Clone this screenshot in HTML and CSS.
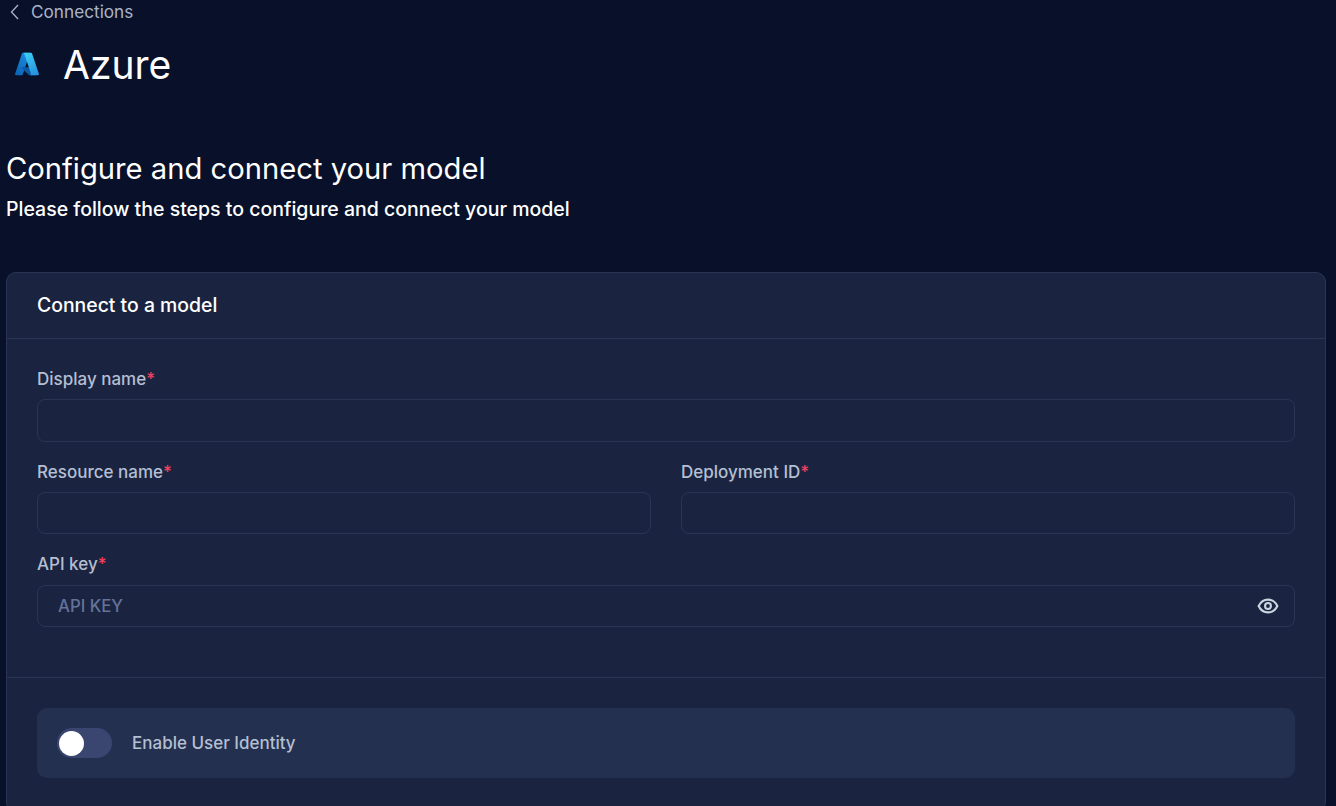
FILE: index.html
```html
<!DOCTYPE html>
<html lang="en">
<head>
<meta charset="utf-8">
<title>Azure</title>
<link rel="stylesheet" href="styles.css">
</head>
<body>
<main class="page">
  <a class="back" href="#">
    <svg class="back-icon" width="10" height="16" viewBox="0 0 10 16" fill="none"><path d="M8 1 L1.5 8 L8 15" stroke="#aab4c8" stroke-width="1.3"/></svg>
    <span>Connections</span>
  </a>
  <div class="title-row">
    <svg class="logo" viewBox="0 0 96 96">
      <defs>
        <linearGradient id="a1" x1="0.6" y1="0" x2="0.1" y2="1"><stop offset="0" stop-color="#1b8ade"/><stop offset="1" stop-color="#0b63b4"/></linearGradient>
        <linearGradient id="a2" x1="0.3" y1="0" x2="0.7" y2="1"><stop offset="0" stop-color="#3ccbf4"/><stop offset="1" stop-color="#2892df"/></linearGradient>
      </defs>
      <path d="M33.34 6.54h26.04l-27.03 80.1a4.15 4.15 0 0 1-3.94 2.81H8.15a4.14 4.14 0 0 1-3.93-5.47L29.4 9.38a4.15 4.15 0 0 1 3.94-2.83z" fill="url(#a1)"/>
      <path d="M71.17 60.26H29.88a1.91 1.91 0 0 0-1.3 3.31l26.53 24.76a4.17 4.17 0 0 0 2.85 1.12h23.38z" fill="#0a5aa8"/>
      <path d="M66.6 9.36a4.14 4.14 0 0 0-3.93-2.82H33.65a4.15 4.15 0 0 1 3.93 2.82l25.18 74.62a4.15 4.15 0 0 1-3.93 5.48h29.02a4.15 4.15 0 0 0 3.93-5.48z" fill="url(#a2)"/>
    </svg>
    <h1>Azure</h1>
  </div>
  <section class="intro">
    <h2>Configure and connect your model</h2>
    <p>Please follow the steps to configure and connect your model</p>
  </section>
  <section class="card">
    <header class="card-head"><span>Connect to a model</span></header>
    <div class="form">
      <div class="field">
        <label>Display name<span class="req">*</span></label>
        <div class="input display"></div>
      </div>
      <div class="two">
        <div class="field">
          <label>Resource name<span class="req">*</span></label>
          <div class="input"></div>
        </div>
        <div class="field">
          <label>Deployment ID<span class="req">*</span></label>
          <div class="input"></div>
        </div>
      </div>
      <div class="field field-key">
        <label>API key<span class="req">*</span></label>
        <div class="input key">
          <span class="placeholder">API KEY</span>
          <svg width="22" height="22" viewBox="0 0 24 24" fill="none" stroke="#cbd5e1" stroke-width="2.3"><path d="M1.8 12 C4 7.4 7.6 5 12 5 C16.4 5 20 7.4 22.2 12 C20 16.6 16.4 19 12 19 C7.6 19 4 16.6 1.8 12 Z"/><circle cx="12" cy="12" r="3.2"/></svg>
        </div>
      </div>
    </div>
    <div class="identity-wrap">
      <div class="identity">
        <span class="toggle"><span class="knob"></span></span>
        <span class="identity-label">Enable User Identity</span>
      </div>
    </div>
  </section>
</main>
</body>
</html>
```

FILE: styles.css
```css
* { box-sizing: border-box; }
html, body { margin: 0; height: 806px; overflow: hidden; }
body {
  background: #081129;
  font-family: Inter, "Liberation Sans", sans-serif;
  color: #fff;
}
.page { padding: 0 10px 0 6px; }
.back {
  display: flex; align-items: center; gap: 11px;
  height: 23px; padding-left: 4px;
  color: #aab4c8; font-size: 17.2px; text-decoration: none;
}
.title-row { display: flex; align-items: center; gap: 23px; height: 60px; padding: 0 0 4px 8px; margin-top: 14px; }
.logo { display: block; width: 26px; height: 26px; margin-top: -2px; }
h1 { margin: 0; font-size: 39px; font-weight: 400; line-height: 44px; }
.intro { margin-top: 54px; }
h2 { margin: 0; font-size: 29.2px; font-weight: 430; line-height: 36px; }
.intro p { margin: 9px 0 0; font-size: 19.5px; line-height: 27px; font-weight: 500; }
.card {
  margin-top: 49px;
  height: 540px;
  background: #1a2440;
  border: 1px solid #2a3556;
  border-radius: 10px;
}
.card-head {
  height: 66px; padding: 0 30px 2px;
  display: flex; align-items: center;
  font-size: 19.4px; font-weight: 500;
  border-bottom: 1px solid #2a3556;
}
.form { padding: 28px 30px 0; display: flex; flex-direction: column; gap: 18px; height: 339px; border-bottom: 1px solid #2a3556; }
.field { display: flex; flex-direction: column; gap: 8px; flex: 1; }
.form > .field { flex: none; }
.form > .field-key { gap: 9px; }
.two { display: flex; gap: 30px; }
label { font-size: 17px; line-height: 24px; color: #b4bfd2; font-weight: 450; }
.req { color: #f43f5e; }
.input {
  height: 42px;
  border: 1px solid #2a3556;
  border-radius: 8px;
}
.input.display { height: 43px; }
.key { display: flex; align-items: center; justify-content: space-between; padding: 0 15px 0 20px; }
.placeholder { font-size: 16.8px; color: #64739a; font-weight: 450; }
.identity-wrap { padding: 30px 30px 0; }
.identity {
  height: 70px; padding: 0 20px;
  background: #243050; border-radius: 10px;
  display: flex; align-items: center; gap: 20px;
}
.toggle { width: 55px; height: 30px; border-radius: 15px; background: #3a4670; display: flex; align-items: center; padding-left: 2px; }
.knob { width: 25px; height: 25px; border-radius: 50%; background: #fff; }
.identity-label { font-size: 17px; color: #b4bfd2; font-weight: 450; line-height: 24px; }
```
